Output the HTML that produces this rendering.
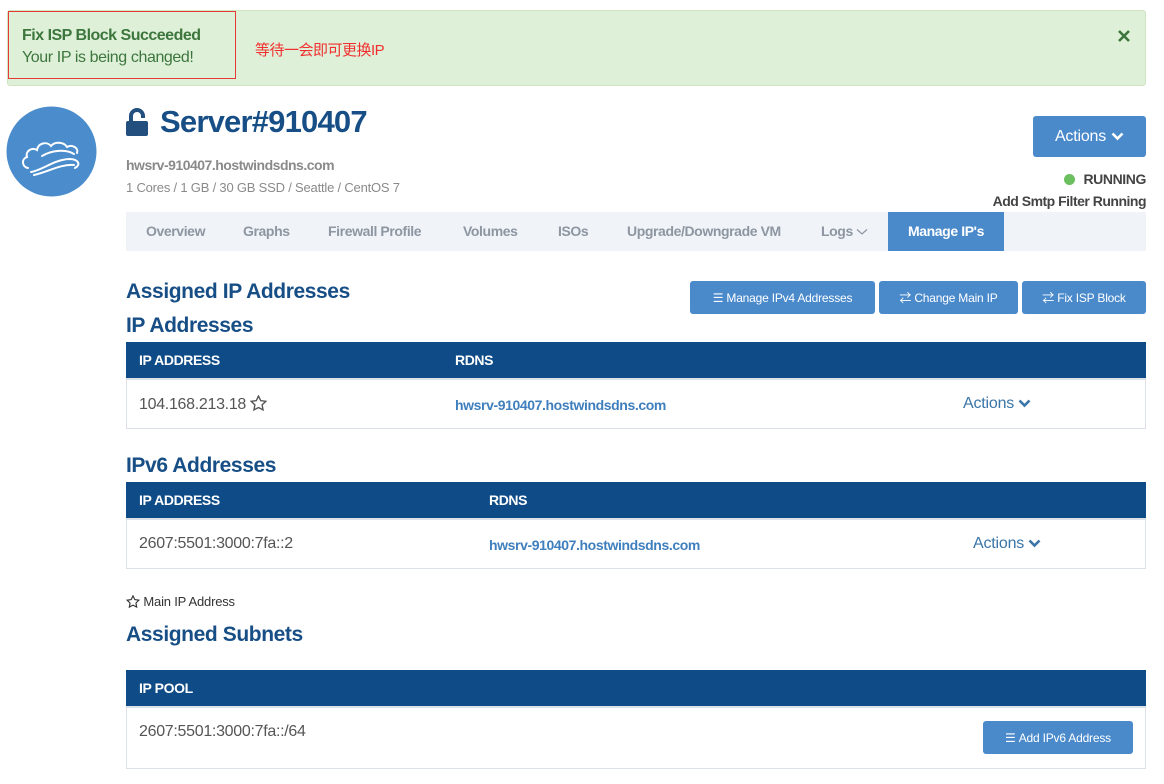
<!DOCTYPE html>
<html><head><meta charset="utf-8"><style>
body{margin:0;width:1164px;height:784px;background:#fff;font-family:"Liberation Sans","Noto Sans CJK SC",sans-serif;position:relative;overflow:hidden}
.a{position:absolute;white-space:nowrap}
.btn{position:absolute;background:#4a8acb;color:#fff;border-radius:3px;font-size:12px;display:flex;align-items:center;justify-content:center;letter-spacing:-0.2px}
.h2{position:absolute;color:#174e86;font-weight:bold;font-size:21px;letter-spacing:-0.4px}
.th{position:absolute;left:126px;width:1020px;height:36px;background:#0f4c87;color:#fff;font-weight:bold;font-size:14px;letter-spacing:-0.4px}
.tr{position:absolute;left:126px;width:1018px;border:1px solid #dde2e8;border-top:none}
.link{color:#3f7fbd;font-weight:bold;font-size:14px;letter-spacing:-0.4px}
.act{color:#3a75a8;font-size:16px;letter-spacing:-0.2px}
.tab{position:absolute;top:223px;font-size:14px;font-weight:bold;color:#8d96a1;letter-spacing:-0.4px;white-space:nowrap}
svg.i{display:inline-block;vertical-align:middle}
</style></head><body>
<div class="a" style="left:7px;top:10px;width:1137px;height:74px;background:#dff0d8;border:1px solid #d0e6c2;border-radius:3px"></div>
<div class="a" style="left:8px;top:11px;width:226px;height:66px;border:1px solid #e53935"></div>
<div class="a" style="left:22px;top:27px;font-size:16px;font-weight:bold;color:#3c763d;letter-spacing:-0.5px">Fix ISP Block Succeeded</div>
<div class="a" style="left:22px;top:49px;font-size:16px;color:#3c763d;letter-spacing:-0.4px">Your IP is being changed!</div>
<div class="a" style="left:255px;top:39px;font-size:15px;color:#f03030;letter-spacing:-0.5px">等待一会即可更换IP</div>
<svg class="a" style="left:1118px;top:30px" width="12" height="12" viewBox="0 0 12 12"><path d="M1 1L11 11M11 1L1 11" stroke="#3c763d" stroke-width="2.6"/></svg>

<svg class="a" style="left:6px;top:106px" width="91" height="91" viewBox="0 0 91 91"><circle cx="45.5" cy="45.5" r="45" fill="#4a8ccc"/>
<g fill="none" stroke="#fff" stroke-width="2" stroke-linecap="round"><path d="M22 62c-6-1-7-9-1-11-2-6 5-10 10-7 1-7 10-9 14-4 4-5 13-4 16 1 5-3 12 1 10 6"/><path d="M25 66c12-2 22-12 38-13 10 0 12 6 6 9"/><path d="M28 69c14-3 26-11 40-10"/><path d="M36 50c10-6 24-7 32-2"/></g></svg>

<svg class="a" style="left:126px;top:108px" width="27" height="28" viewBox="0 0 27 28"><path d="M5 13V8a6 6 0 0 1 12 0v2" fill="none" stroke="#234f7e" stroke-width="4"/><rect x="0" y="13" width="22" height="15" rx="2" fill="#234f7e"/></svg>
<div class="a" style="left:160px;top:104px;font-size:31px;font-weight:bold;color:#174e86;letter-spacing:-0.8px">Server#910407</div>
<div class="a" style="left:126px;top:157px;font-size:14px;font-weight:bold;color:#8a8a8a;letter-spacing:-0.5px">hwsrv-910407.hostwindsdns.com</div>
<div class="a" style="left:126px;top:180px;font-size:13px;color:#8a8a8a;letter-spacing:-0.2px">1 Cores / 1 GB / 30 GB SSD / Seattle / CentOS 7</div>

<div class="btn" style="left:1033px;top:116px;width:113px;height:41px;font-size:16px">Actions<svg class="i" style="margin-left:5px" width="13" height="9" viewBox="0 0 13 9"><path d="M1.5 1.5L6.5 6.5L11.5 1.5" fill="none" stroke="#fff" stroke-width="2.6"/></svg></div>
<div class="a" style="left:1064px;top:174px;width:11px;height:11px;border-radius:50%;background:#6bbf5f"></div>
<div class="a" style="right:18px;top:171px;font-size:14px;font-weight:bold;color:#444;letter-spacing:-0.4px">RUNNING</div>
<div class="a" style="right:18px;top:193px;font-size:14px;font-weight:bold;color:#444;letter-spacing:-0.5px">Add Smtp Filter Running</div>

<div class="a" style="left:126px;top:212px;width:1020px;height:39px;background:#f0f3f8"></div>
<div class="a" style="left:888px;top:212px;width:116px;height:39px;background:#4a8acb"></div>
<div class="tab" style="left:146px">Overview</div>
<div class="tab" style="left:243px">Graphs</div>
<div class="tab" style="left:328px">Firewall Profile</div>
<div class="tab" style="left:463px">Volumes</div>
<div class="tab" style="left:558px">ISOs</div>
<div class="tab" style="left:627px">Upgrade/Downgrade VM</div>
<div class="tab" style="left:821px">Logs <svg class="i" width="12" height="8" viewBox="0 0 12 8"><path d="M1 1.5L6 6L11 1.5" fill="none" stroke="#8d96a1" stroke-width="1.2"/></svg></div>
<div class="tab" style="left:908px;color:#fff">Manage IP's</div>

<div class="h2" style="left:126px;top:280px">Assigned IP Addresses</div>
<div class="btn" style="left:690px;top:281px;width:185px;height:33px">☰&nbsp;Manage IPv4 Addresses</div>
<div class="btn" style="left:879px;top:281px;width:139px;height:33px">⇄&nbsp;Change Main IP</div>
<div class="btn" style="left:1022px;top:281px;width:124px;height:33px">⇄&nbsp;Fix ISP Block</div>
<div class="h2" style="left:126px;top:314px">IP Addresses</div>

<div class="th" style="top:342px"><span class="a" style="left:13px;top:10px">IP ADDRESS</span><span class="a" style="left:329px;top:10px">RDNS</span></div>
<div class="tr" style="top:378px;height:48px;border-top:2px solid #dde2e8">
<span class="a" style="left:12px;top:16px;font-size:16px;color:#555;letter-spacing:-0.3px">104.168.213.18 <svg class="i" style="margin-top:-3px" width="17" height="16" viewBox="0 0 24 23"><path d="M12 1.5l3.2 6.6 7.2 1-5.2 5.1 1.3 7.2L12 18l-6.5 3.4 1.3-7.2L1.6 9.1l7.2-1z" fill="none" stroke="#555" stroke-width="2"/></svg></span>
<span class="a link" style="left:328px;top:17px">hwsrv-910407.hostwindsdns.com</span>
<span class="a act" style="left:836px;top:15px">Actions <svg class="i" width="13" height="9" viewBox="0 0 13 9"><path d="M1.5 1.5L6.5 6.5L11.5 1.5" fill="none" stroke="#3a75a8" stroke-width="2.6"/></svg></span></div>

<div class="h2" style="left:126px;top:454px">IPv6 Addresses</div>
<div class="th" style="top:482px"><span class="a" style="left:13px;top:10px">IP ADDRESS</span><span class="a" style="left:363px;top:10px">RDNS</span></div>
<div class="tr" style="top:518px;height:48px;border-top:2px solid #dde2e8">
<span class="a" style="left:12px;top:15px;font-size:16px;color:#555;letter-spacing:-0.3px">2607:5501:3000:7fa::2</span>
<span class="a link" style="left:362px;top:17px">hwsrv-910407.hostwindsdns.com</span>
<span class="a act" style="left:846px;top:15px">Actions <svg class="i" width="13" height="9" viewBox="0 0 13 9"><path d="M1.5 1.5L6.5 6.5L11.5 1.5" fill="none" stroke="#3a75a8" stroke-width="2.6"/></svg></span></div>

<div class="a" style="left:126px;top:594px;font-size:13px;color:#333;letter-spacing:-0.2px"><svg class="i" style="margin-top:-3px" width="14" height="13" viewBox="0 0 24 23"><path d="M12 1.5l3.2 6.6 7.2 1-5.2 5.1 1.3 7.2L12 18l-6.5 3.4 1.3-7.2L1.6 9.1l7.2-1z" fill="none" stroke="#333" stroke-width="2"/></svg> Main IP Address</div>
<div class="h2" style="left:126px;top:623px">Assigned Subnets</div>
<div class="th" style="top:670px"><span class="a" style="left:13px;top:10px">IP POOL</span></div>
<div class="tr" style="top:706px;height:60px;border-top:2px solid #dde2e8">
<span class="a" style="left:12px;top:15px;font-size:16px;color:#555;letter-spacing:-0.3px">2607:5501:3000:7fa::/64</span></div>
<div class="btn" style="left:983px;top:721px;width:150px;height:33px">☰&nbsp;Add IPv6 Address</div>
</body></html>
